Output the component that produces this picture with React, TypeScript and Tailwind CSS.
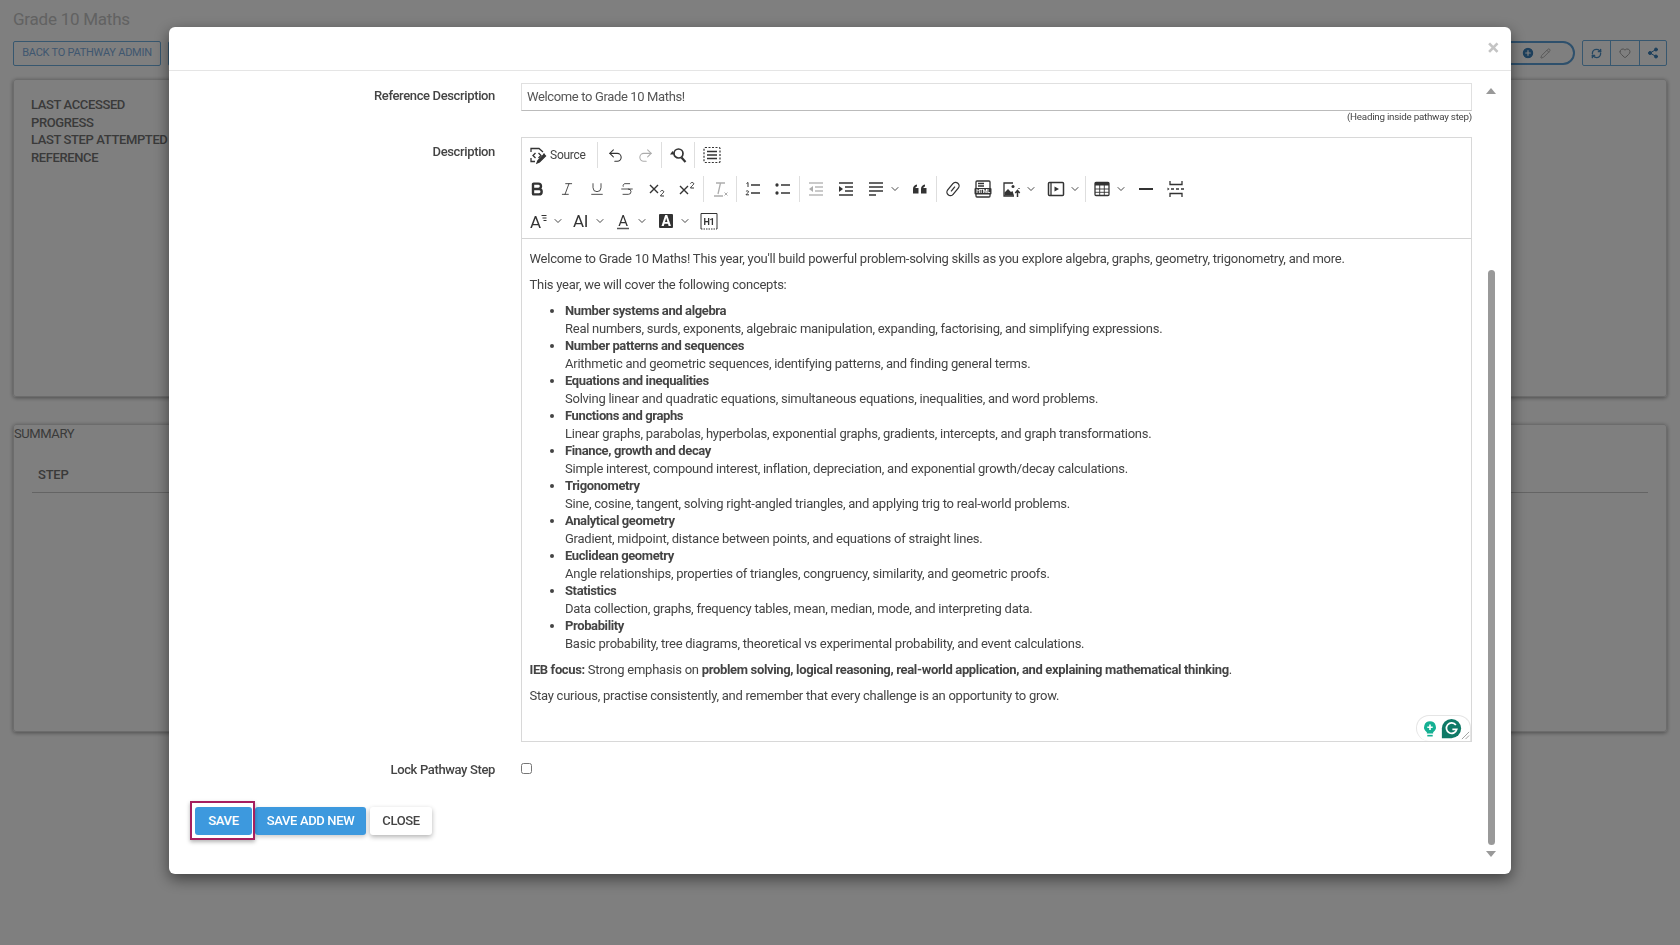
import type { ReactNode } from "react";
import { ChevronDown, Bold, Italic, Underline, Strikethrough, Undo2, Redo2, RefreshCw, Heart, Share2, CirclePlus, Pencil } from "lucide-react";

const topics = [
  ["Number systems and algebra", "Real numbers, surds, exponents, algebraic manipulation, expanding, factorising, and simplifying expressions."],
  ["Number patterns and sequences", "Arithmetic and geometric sequences, identifying patterns, and finding general terms."],
  ["Equations and inequalities", "Solving linear and quadratic equations, simultaneous equations, inequalities, and word problems."],
  ["Functions and graphs", "Linear graphs, parabolas, hyperbolas, exponential graphs, gradients, intercepts, and graph transformations."],
  ["Finance, growth and decay", "Simple interest, compound interest, inflation, depreciation, and exponential growth/decay calculations."],
  ["Trigonometry", "Sine, cosine, tangent, solving right-angled triangles, and applying trig to real-world problems."],
  ["Analytical geometry", "Gradient, midpoint, distance between points, and equations of straight lines."],
  ["Euclidean geometry", "Angle relationships, properties of triangles, congruency, similarity, and geometric proofs."],
  ["Statistics", "Data collection, graphs, frequency tables, mean, median, mode, and interpreting data."],
  ["Probability", "Basic probability, tree diagrams, theoretical vs experimental probability, and event calculations."],
];

const Ico = ({ children, className = "" }: { children: ReactNode; className?: string }) => (
  <svg viewBox="0 0 20 20" className={`w-[20px] h-[20px] ${className}`} fill="none" stroke="#333" strokeWidth="1.3">
    {children}
  </svg>
);

const Btn = ({ children, w = "w-[30px]" }: { children: ReactNode; w?: string }) => (
  <div className={`${w} h-[30px] flex items-center justify-center shrink-0`}>{children}</div>
);

const Drop = ({ children, w = "w-[44px]" }: { children: ReactNode; w?: string }) => (
  <div className={`${w} h-[30px] flex items-center shrink-0 pl-[5px] gap-[3px]`}>
    {children}
    <ChevronDown size={12} color="#333" strokeWidth={1.8} />
  </div>
);

const Sep = () => <div className="w-px h-[26px] bg-[#dedede] mx-[1px] shrink-0" />;

const Grey = ({ children }: { children: ReactNode }) => <span className="opacity-40">{children}</span>;

const Lines = ({ ys, x1 = 3, x2 = 17 }: { ys: number[]; x1?: number; x2?: number }) => (
  <>
    {ys.map((y) => (
      <line key={y} x1={x1} x2={x2} y1={y} y2={y} />
    ))}
  </>
);

function Toolbar() {
  return (
    <div className="border-b border-[#d4d4d4] h-[101px] flex flex-col">
      <div className="h-[34px] flex items-center">
        <div className="flex items-center w-[74px] pl-[6px] gap-[2px]">
          <Ico>
            <path d="M3 7V3.500h8L15 7M3 13v3.500h4M16 8.500v3" />
            <path d="M7.500 8 5 10.500 7.500 13M10.500 8l2.500 2.500-2.500 2.500" />
            <path d="M9 18l1-2.500 6-6 1.500 1.500-6 6z" fill="#333" />
          </Ico>
          <span className="text-[12px] text-[#444]">Source</span>
        </div>
        <Sep />
        <div className="w-[1px]" />
        <Btn><Undo2 size={17} color="#333" strokeWidth={1.5} /></Btn>
        <Btn><Grey><Redo2 size={17} color="#333" strokeWidth={1.5} /></Grey></Btn>
        <Sep />
        <Btn>
          <Ico>
            <circle cx="10.500" cy="8.500" r="4.500" strokeWidth="1.700" />
            <path d="M13.500 12.500l4 4.500" strokeWidth="2.200" />
            <path d="M2 9.500 4.500 6 7 9.500z" fill="#333" stroke="none" />
          </Ico>
        </Btn>
        <Sep />
        <div className="w-[1px]" />
        <Btn>
          <Ico>
            <rect x="2" y="2.500" width="16" height="15" rx="1" strokeDasharray="2 1.500" strokeWidth="1.200" />
            <Lines ys={[6.500, 10, 13.500]} x1={5} x2={15} />
          </Ico>
        </Btn>
      </div>
      <div className="h-[34px] flex items-center">
        <Btn><Bold size={16} color="#333" strokeWidth={3.6} /></Btn>
        <Btn><Italic size={16} color="#333" strokeWidth={1.3} /></Btn>
        <Btn><Underline size={16} color="#333" strokeWidth={1.3} /></Btn>
        <Btn><Strikethrough size={16} color="#333" strokeWidth={1.3} /></Btn>
        <Btn>
          <Ico>
            <path d="M3 6l8 8M11 6l-8 8" strokeWidth="1.400" />
            <path d="M13.500 12.500c.5-1.500 3.500-1.300 3.200.5-.2 1-2.600 2.200-3.200 4h3.500" strokeWidth="1" />
          </Ico>
        </Btn>
        <Btn>
          <Ico>
            <path d="M3 7l8 8M11 7l-8 8" strokeWidth="1.400" />
            <path d="M13.500 4.500c.5-1.500 3.500-1.300 3.200.5-.2 1-2.600 2.200-3.200 4h3.500" strokeWidth="1" />
          </Ico>
        </Btn>
        <Sep />
        <Btn>
          <Grey>
            <Ico>
              <path d="M6 4h9M10.500 4 8 15M4 17h9" />
              <path d="M14.500 13.500l3 3M17.500 13.500l-3 3" strokeWidth="1" />
            </Ico>
          </Grey>
        </Btn>
        <Sep />
        <Btn>
          <Ico>
            <Lines ys={[6, 14]} x1={8} x2={17} />
            <path d="M3.500 4.500 5 3.500v4.500" strokeWidth="1" />
            <path d="M3 12.500c.5-1 3-.8 2.600.5-.2.700-2 1.400-2.600 2.800h3" strokeWidth="1" />
          </Ico>
        </Btn>
        <Btn>
          <Ico>
            <Lines ys={[6, 14]} x1={8} x2={17} />
            <circle cx="4" cy="6" r="1" fill="#333" />
            <circle cx="4" cy="14" r="1" fill="#333" />
          </Ico>
        </Btn>
        <Sep />
        <Btn>
          <Grey>
            <Ico>
              <Lines ys={[4, 16]} />
              <Lines ys={[8, 12]} x1={9} />
              <path d="M7 7v6l-4-3z" fill="#333" stroke="none" />
            </Ico>
          </Grey>
        </Btn>
        <Btn>
          <Ico>
            <Lines ys={[4, 16]} />
            <Lines ys={[8, 12]} x1={9} />
            <path d="M3 7v6l4-3z" fill="#333" stroke="none" />
          </Ico>
        </Btn>
        <Drop>
          <Ico><line x1="3" x2="17" y1="4" y2="4" /><line x1="3" x2="17" y1="8" y2="8" /><line x1="3" x2="17" y1="12" y2="12" /><line x1="3" x2="10" y1="16" y2="16" /></Ico>
        </Drop>
        <Btn>
          <Ico>
            <path d="M3 14.500V10c0-2.500 1.500-4 4-4.500v2c-1 .3-1.500.8-1.600 1.500H8.500v5.500zM11 14.500V10c0-2.500 1.500-4 4-4.500v2c-1 .3-1.500.8-1.600 1.500h3.100v5.500z" fill="#333" stroke="none" />
          </Ico>
        </Btn>
        <Sep />
        <Btn>
          <Ico>
            <g transform="rotate(40 10 10)">
              <rect x="6.500" y="2.500" width="7" height="15" rx="3.500" />
              <line x1="10" x2="10" y1="7" y2="13" />
            </g>
          </Ico>
        </Btn>
        <Btn w="w-[29px]">
          <Ico>
            <rect x="3" y="2" width="14" height="16" rx="1" />
            <Lines ys={[4.500, 7]} x1={5} x2={11} />
            <rect x="1.500" y="9" width="17" height="6.500" rx="1" fill="#333" stroke="none" />
            <text x="10" y="14.200" textAnchor="middle" fontSize="5.400" fontWeight="700" fill="#fff" stroke="none" fontFamily="Roboto, sans-serif">HTML</text>
          </Ico>
        </Btn>
        <Drop>
          <Ico>
            <path d="M11 4H2v13h10M17 9v1" />
            <path d="M2.500 16.500v-3l3.500-3.500 3 3 1.500-1 1.500 4.500z" fill="#333" stroke="none" />
            <circle cx="11" cy="7.500" r="1.500" fill="#333" stroke="none" />
            <path d="M15.500 18v-6M13.300 14l2.200-2.500 2.200 2.500" strokeWidth="1.500" />
          </Ico>
        </Drop>
        <Drop w="w-[43px]">
          <Ico>
            <rect x="2.500" y="3.500" width="15" height="13" rx="1" strokeWidth="1.500" />
            <line x1="5" x2="5" y1="4" y2="16" />
            <path d="M8.500 7.500v5l4.500-2.500z" fill="#333" stroke="none" />
          </Ico>
        </Drop>
        <Sep />
        <Drop>
          <Ico>
            <rect x="3" y="3.500" width="14" height="13" rx="1" />
            <rect x="3" y="3.500" width="14" height="3" fill="#333" stroke="none" />
            <path d="M3 10h14M3 13.300h14M7.700 6v10.500M12.300 6v10.500" strokeWidth="0.900" />
          </Ico>
        </Drop>
        <Btn><Ico><line x1="3" x2="17" y1="10" y2="10" strokeWidth="2" /></Ico></Btn>
        <Btn>
          <Ico>
            <path d="M4 2v3.500h12V2M4 18v-3.500h12V18" />
            <path d="M5 10h3M10 10h3M15 10h3" strokeWidth="1.500" />
            <path d="M1.500 8.500v3l2-1.500z" fill="#333" stroke="none" />
          </Ico>
        </Btn>
      </div>
      <div className="h-[30px] flex items-center text-[#333] pl-[2px]">
        <Drop w="w-[43px]">
          <Ico>
            <text x="1" y="16.500" fontSize="17" fill="#333" stroke="none" fontFamily="Roboto, sans-serif">A</text>
            <path d="M12.500 4.500h5M13.500 7h4M14.500 9.500h3" strokeWidth="1" />
          </Ico>
        </Drop>
        <Drop w="w-[41px]">
          <span className="text-[17px] leading-none w-[19px] pl-[1px]">AI</span>
        </Drop>
        <Drop w="w-[43px]">
          <Ico>
            <text x="10" y="14.500" textAnchor="middle" fontSize="15" fill="#333" stroke="none" fontFamily="Roboto, sans-serif">A</text>
            <line x1="4" x2="16" y1="17.500" y2="17.500" strokeWidth="1.500" stroke="#555" />
          </Ico>
        </Drop>
        <Drop w="w-[43px]">
          <Ico>
            <rect x="3" y="3" width="14" height="14" rx="1" fill="#333" stroke="none" />
            <text x="10" y="15" textAnchor="middle" fontSize="14" fontWeight="700" fill="#fff" stroke="none" fontFamily="Roboto, sans-serif">A</text>
          </Ico>
        </Drop>
        <div className="w-[30px] h-[30px] flex items-center justify-center">
          <Ico>
            <path d="M2 18V2.500h16V18" strokeWidth="1" />
            <path d="M2 18h16" strokeDasharray="1.500 1" strokeWidth="1.200" />
            <text x="10" y="13.500" textAnchor="middle" fontSize="9" fontWeight="700" fill="#333" stroke="none" fontFamily="Roboto, sans-serif">H1</text>
          </Ico>
        </div>
      </div>
    </div>
  );
}

function Editor() {
  return (
    <div className="relative h-[502px] pt-[11px] px-[7.500px] text-[13px] leading-[17.480px] text-[#444] tracking-[-0.25px]">
      <p>Welcome to Grade 10 Maths! This year, you'll build powerful problem-solving skills as you explore algebra, graphs, geometry, trigonometry, and more.</p>
      <p className="mt-[8.700px]">This year, we will cover the following concepts:</p>
      <ul className="mt-[8.700px] pl-[35.500px] list-disc">
        {topics.map(([title, text]) => (
          <li key={title}>
            <strong className="font-bold tracking-[-0.38px]">{title}</strong>
            <br />
            {text}
          </li>
        ))}
      </ul>
      <p className="mt-[8.700px]">
        <strong className="font-bold tracking-[-0.38px]">IEB focus:</strong> Strong emphasis on <strong className="font-bold tracking-[-0.34px]">problem solving, logical reasoning, real-world application, and explaining mathematical thinking</strong>.
      </p>
      <p className="mt-[8.700px]">Stay curious, practise consistently, and remember that every challenge is an opportunity to grow.</p>

      {/* grammarly pill */}
      <div className="absolute right-0 bottom-0 w-[55px] h-[26px] bg-white border border-b-0 border-[#e5e5e5] rounded-t-[13px] rounded-l-[13px] flex items-center pl-[4px] gap-[2px]">
        <svg viewBox="0 0 20 20" className="w-[18px] h-[18px]">
          <path d="M10 1.500a6.500 6.500 0 0 0-3.500 12v1.500h7v-1.500A6.500 6.500 0 0 0 10 1.500z" fill="#15b093" />
          <path d="M10 5v6M7 8h6" stroke="#fff" strokeWidth="1.800" />
          <rect x="7" y="16.500" width="6" height="1.800" fill="#15b093" />
        </svg>
        <svg viewBox="0 0 24 24" className="w-[21px] h-[21px]">
          <path d="M12 1a11 11 0 1 1 0 22H1V12A11 11 0 0 1 12 1z" fill="#0f7a67" />
          <path d="M17 8a6 6 0 1 0 1 5h-5" fill="none" stroke="#fff" strokeWidth="2" />
        </svg>
      </div>
      <svg viewBox="0 0 10 10" className="absolute right-[1px] bottom-[1px] w-[9px] h-[9px]" stroke="#999" strokeWidth="1">
        <path d="M1 9l8-8M5 9l4-4" />
      </svg>
    </div>
  );
}

function Modal() {
  return (
    <div className="w-[1342px] h-[847px] bg-white rounded-[6px] shadow-[0_5px_15px_rgba(0,0,0,0.5)] flex flex-col overflow-hidden">
      <div className="h-[44px] border-b border-[#e5e5e5] flex items-center justify-end pr-[12px] shrink-0">
        <span className="text-[22px] font-bold text-[#c4c4c4] leading-none pb-[2px]">×</span>
      </div>
      <div className="flex flex-1 min-h-0">
        <div className="flex-1 flex flex-col">
          <div className="grid grid-cols-[326px_951px] gap-x-[26px] pt-[12px]">
            <label className="text-[13px] font-medium text-[#444] text-right pt-[3px] tracking-[-0.36px]">Reference Description</label>
            <div>
              <div className="h-[28px] border border-[#e0e0e0] border-b-[#bbb] flex items-center pl-[5px] text-[13px] leading-[18px] pb-[1px] text-[#555] tracking-[-0.36px]">Welcome to Grade 10 Maths!</div>
              <div className="text-[9.800px] leading-[12px] text-[#444] text-right">(Heading inside pathway step)</div>
            </div>
            <label className="text-[13px] font-medium text-[#444] text-right pt-[5px] mt-[14px] tracking-[-0.36px]">Description</label>
            <div className="border border-[#d8d8d8] mt-[14px] h-[605px]">
              <Toolbar />
              <Editor />
            </div>
            <label className="text-[13px] font-medium text-[#444] text-right mt-[18px] tracking-[-0.36px]">Lock Pathway Step</label>
            <div className="mt-[21px]">
              <input type="checkbox" className="block w-[11px] h-[11px]" />
            </div>
          </div>
          <div className="flex items-center pl-[26px] mt-[27px] text-[13px] font-medium tracking-[-0.36px]">
            {/* red outline sits over the save button */}
            <div className="relative">
              <button className="w-[57px] h-[28px] bg-[#3d99de] text-white rounded-[3px]">SAVE</button>
              <div className="absolute -left-[5px] -right-[3px] -top-[6px] -bottom-[5px] border-2 border-[#a61e5f] shadow-[0_2px_4px_rgba(0,0,0,0.3)]" />
            </div>
            <button className="w-[111px] h-[28px] ml-[3px] bg-[#3d99de] text-white rounded-[3px] shadow-[0_2px_4px_rgba(0,0,0,0.2)]">SAVE ADD NEW</button>
            <button className="w-[62px] h-[28px] ml-[4px] bg-white text-[#444] rounded-[3px] shadow-[0_2px_5px_rgba(0,0,0,0.3)]">CLOSE</button>
          </div>
        </div>
        <div className="w-[39px] pr-[1px] relative shrink-0 flex flex-col items-center pt-[17px]">
          <div className="w-0 h-0 border-x-[5px] border-x-transparent border-b-[6px] border-b-[#999]" />
          <div className="w-[7px] h-[575px] mt-[176px] rounded-full bg-[#999]" />
          <div className="w-0 h-0 mt-[6px] border-x-[5px] border-x-transparent border-t-[6px] border-t-[#999]" />
        </div>
      </div>
    </div>
  );
}

function Page() {
  return (
    <div className="px-[13px] pt-[9px] text-[#747474]">
      <h1 className="text-[17px] leading-[20px] text-[#c4c4c4]">Grade 10 Maths</h1>
      <div className="flex items-center justify-between mt-[11px] h-[26px]">
        <div className="flex gap-[7px]">
          <div className="h-[25px] w-[148px] flex items-center justify-center border border-[#6eaede] rounded-[2px] text-[11px] text-[#7eaee0]">BACK TO PATHWAY ADMIN</div>
          <div className="h-[25px] w-[60px] border border-[#6eaede] rounded-[2px]" />
        </div>
        <div className="flex items-center gap-[7px]">
          <div className="w-[90px] h-[24px] border-2 border-[#5ca0d8] rounded-full flex items-center justify-end gap-[5px] pr-[22px]">
            <CirclePlus size={14} color="#fff" fill="#3a7fb8" />
            <Pencil size={11} color="#aaa" />
          </div>
          <div className="flex h-[26px] border border-[#6eaede] rounded-[2px]">
            <div className="w-[28px] flex items-center justify-center border-r border-[#6eaede]"><RefreshCw size={11} color="#4a8ec4" strokeWidth={3} /></div>
            <div className="w-[29px] flex items-center justify-center border-r border-[#6eaede]"><Heart size={12} color="#a0a0a0" /></div>
            <div className="w-[26px] flex items-center justify-center"><Share2 size={12} color="#3a7fb8" fill="#3a7fb8" /></div>
          </div>
        </div>
      </div>
      <div className="mt-[13px] h-[318px] border border-[#d8d8d8] rounded-[3px] shadow-[0_1px_4px_rgba(0,0,0,0.4)] pl-[17px] pt-[16px] text-[13px] leading-[17.500px] font-medium tracking-[-0.38px]">
        <div>LAST ACCESSED</div>
        <div>PROGRESS</div>
        <div>LAST STEP ATTEMPTED</div>
        <div>REFERENCE</div>
      </div>
      <div className="mt-[27px] h-[308px] border border-[#d8d8d8] rounded-[3px] shadow-[0_1px_4px_rgba(0,0,0,0.4)]">
        <div className="text-[13px] leading-[17px] tracking-[-0.4px]">SUMMARY</div>
        <div className="mx-[18px] mt-[25px] h-[26px] border-b border-[#c8c8c8] pl-[6px] text-[13px] leading-[16px] font-medium">STEP</div>
      </div>
    </div>
  );
}

export default function App() {
  return (
    <div className="relative h-[945px] w-[1680px] overflow-hidden bg-white [font-family:Roboto,sans-serif] tracking-[-0.24px]">
      <Page />
      <div className="fixed inset-0 bg-black/50 pt-[27px] flex justify-center items-start">
        <Modal />
      </div>
    </div>
  );
}
